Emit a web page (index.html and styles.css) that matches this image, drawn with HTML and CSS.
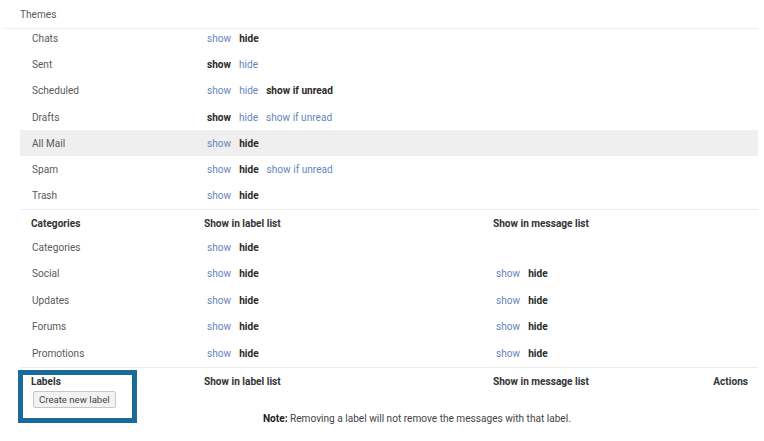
FILE: index.html
```html
<!DOCTYPE html>
<html>
<head>
<meta charset="utf-8">
<link rel="stylesheet" href="styles.css">
</head>
<body>
<div class="page">
  <div class="themes">Themes</div>
  <div class="section system">
    <div class="row first"><span class="name">Chats</span><span class="opts"><a>show</a><b>hide</b></span></div>
    <div class="row"><span class="name">Sent</span><span class="opts"><b>show</b><a>hide</a></span></div>
    <div class="row"><span class="name">Scheduled</span><span class="opts"><a>show</a><a>hide</a><b>show if unread</b></span></div>
    <div class="row"><span class="name">Drafts</span><span class="opts"><b>show</b><a>hide</a><a>show if unread</a></span></div>
    <div class="row hl"><span class="name">All Mail</span><span class="opts"><a>show</a><b>hide</b></span></div>
    <div class="row"><span class="name">Spam</span><span class="opts"><a>show</a><b>hide</b><a>show if unread</a></span></div>
    <div class="row last"><span class="name">Trash</span><span class="opts"><a>show</a><b>hide</b></span></div>
  </div>
  <div class="section cats">
    <div class="row head"><span class="hname">Categories</span><span class="hcol">Show in label list</span><span class="hcol">Show in message list</span></div>
    <div class="row"><span class="name">Categories</span><span class="opts"><a>show</a><b>hide</b></span></div>
    <div class="row"><span class="name">Social</span><span class="opts"><a>show</a><b>hide</b></span><span class="opts"><a>show</a><b>hide</b></span></div>
    <div class="row"><span class="name">Updates</span><span class="opts"><a>show</a><b>hide</b></span><span class="opts"><a>show</a><b>hide</b></span></div>
    <div class="row"><span class="name">Forums</span><span class="opts"><a>show</a><b>hide</b></span><span class="opts"><a>show</a><b>hide</b></span></div>
    <div class="row last"><span class="name">Promotions</span><span class="opts"><a>show</a><b>hide</b></span><span class="opts"><a>show</a><b>hide</b></span></div>
  </div>
  <div class="labels">
    <div class="lhead">
      <div class="lcell">
        <span class="hname">Labels</span>
        <button class="btn">Create new label</button>
      </div>
      <span class="hcol lh">Show in label list</span>
      <span class="hcol lh">Show in message list</span>
      <span class="hcol lh actions">Actions</span>
    </div>
    <div class="note"><b>Note:</b> Removing a label will not remove the messages with that label.</div>
    <div class="callout"></div>
  </div>
</div>
</body>
</html>
```
FILE: styles.css
```css
html, body {
  margin: 0;
  padding: 0;
  background: #ffffff;
}
body {
  font-family: Roboto, "Liberation Sans", Arial, sans-serif;
  font-size: 10.1px;
  color: #5a5a5a;
  width: 764px;
  height: 441px;
  overflow: hidden;
}
.page {
  position: relative;
  padding: 0 6px 0 5px;
}
.themes {
  height: 28px;
  line-height: 30px;
  padding-left: 15px;
  border-bottom: 1px solid #ececec;
  color: #5a5a5a;
}
.section {
  margin-left: 15px;
}
.row {
  display: grid;
  grid-template-columns: 184px 289px 1fr;
  align-items: center;
  height: 26.3px;
}
.row.first {
  margin-top: -4px;
}
.row.last {
  border-bottom: 1px solid #ececec;
}
.row.hl {
  background: #efefef;
}
.name {
  padding-left: 12px;
}
.opts {
  padding-left: 3px;
  display: flex;
  gap: 8px;
}
.opts a {
  color: #6585bd;
}
.opts b {
  color: #2a2a2a;
  font-weight: bold;
}
.cats .row {
  height: 26.5px;
}
.cats .row.head {
  height: 24px;
  padding-top: 3px;
  box-sizing: border-box;
}
.hname {
  padding-left: 11px;
  font-weight: bold;
  color: #333;
}
.hcol {
  font-weight: bold;
  color: #333;
}
.labels {
  margin-left: 15px;
}
.lhead {
  display: grid;
  grid-template-columns: 184px 289px 1fr auto;
  align-items: start;
  padding-top: 8px;
}
.lcell {
  display: flex;
  flex-direction: column;
  align-items: flex-start;
}
.lh {
  line-height: 12px;
}
.actions {
  padding-right: 10px;
}
.btn {
  margin: 4px 0 0 13px;
  height: 17px;
  padding: 0 5px;
  font-family: Roboto, "Liberation Sans", Arial, sans-serif;
  font-size: 9.6px;
  color: #444;
  background: #f2f2f2;
  border: 1px solid #c8c8c8;
  border-radius: 2px;
}
.note {
  padding: 5px 0 0 243px;
  color: #444;
}
.note b {
  color: #222;
}
.callout {
  position: absolute;
  left: 18px;
  top: 370px;
  width: 109px;
  height: 43px;
  border: 5px solid #1a6b9b;
}
```
